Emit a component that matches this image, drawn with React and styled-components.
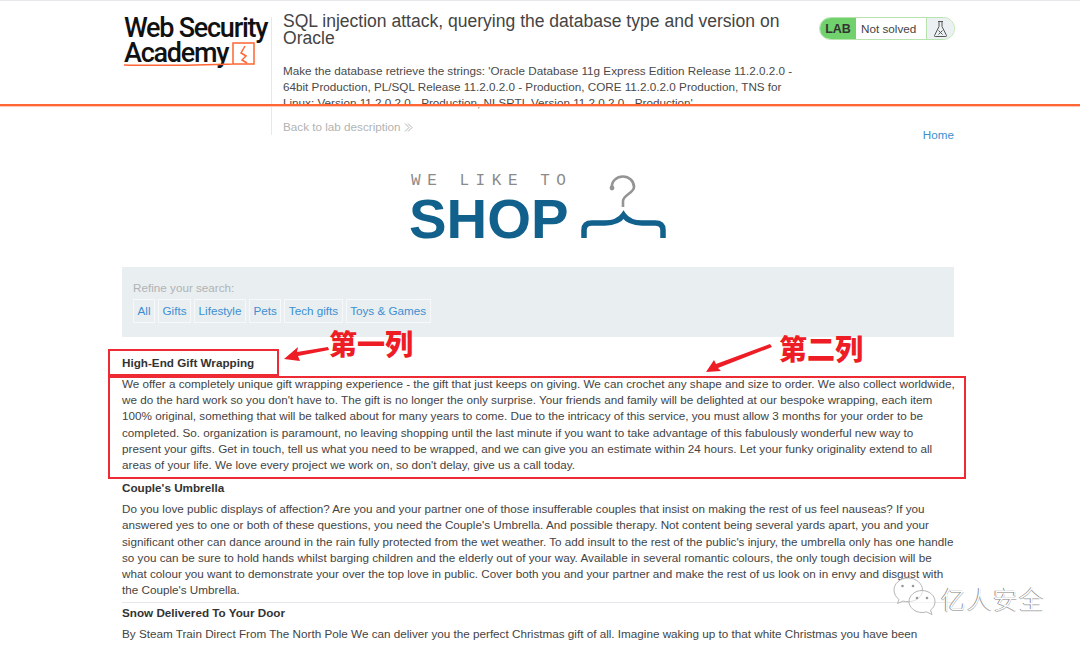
import React from "react";
import styled, { createGlobalStyle } from "styled-components";

const Global = createGlobalStyle`
  html, body {
    margin: 0;
    padding: 0;
    background: #fff;
    overflow: hidden;
  }
  body {
    font-family: "Liberation Sans", Arial, sans-serif;
    color: #333332;
  }
`;

const Page = styled.div`
  position: relative;
  width: 1080px;
  height: 645px;
  overflow: hidden;
  border-top: 1px solid #e6e8ec;
  box-sizing: border-box;
`;

const Header = styled.header`
  display: flex;
  align-items: flex-start;
  height: 127px;
  padding: 16px 125px 0 124px;
  box-sizing: border-box;
`;

const LogoBlock = styled.div`
  position: relative;
  width: 147px;
  height: 60px;
  margin-top: -1px;
  font-family: Roboto, "Liberation Sans", sans-serif;
  font-weight: 500;
  color: #111;
  font-size: 27px;
  line-height: 25px;
  letter-spacing: -1.25px;
  white-space: nowrap;
`;

const LogoLine = styled.div`
  display: block;
`;

const LogoMark = styled.svg`
  position: absolute;
  left: -1px;
  top: 25px;
`;

const Description = styled.div`
  width: 537px;
  height: 118px;
  box-sizing: border-box;
  padding: 0 0 0 11px;
  border-left: 1px solid #e6e8ec;
`;

const Title = styled.h2`
  margin: -4px 0 16px;
  font-size: 17.55px;
  font-weight: 400;
  line-height: 17px;
  color: #444;
`;

const Brief = styled.p`
  margin: 0 0 8px;
  font-size: 11.7px;
  line-height: 16px;
  color: #4a4a4a;
`;

const BackLink = styled.a`
  display: flex;
  align-items: center;
  gap: 3px;
  font-size: 11.7px;
  line-height: 16px;
  color: #b3b3b3;
`;

const Status = styled.div`
  display: flex;
  align-items: stretch;
  height: 23px;
  width: 136px;
  margin-left: 11px;
  box-sizing: border-box;
  border: 1px solid #b8e3ae;
  border-radius: 12px;
  overflow: hidden;
  font-size: 11.7px;
`;

const StatusTag = styled.span`
  display: flex;
  align-items: center;
  justify-content: center;
  width: 36px;
  background: #70d16d;
  font-size: 12.5px;
  font-weight: 700;
  color: #333;
`;

const StatusText = styled.span`
  flex: 1;
  display: flex;
  align-items: center;
  padding-left: 5px;
  color: #444;
`;

const StatusIcon = styled.span`
  display: flex;
  align-items: center;
  justify-content: center;
  width: 27px;
  background: #ebf0f2;
  border-left: 1px solid #b8e3ae;
`;

const OrangeRule = styled.div`
  position: absolute;
  left: 0;
  right: 0;
  top: 103px;
  height: 2px;
  background: #ff6633;
  box-shadow: 0 1px 0 #ffc9b5;
`;

const Main = styled.main`
  width: 832px;
  margin: 0 auto 0 122px;
`;

const HomeRow = styled.nav`
  display: flex;
  justify-content: flex-end;
  height: 21px;
  font-size: 11.7px;
  line-height: 14px;
`;

const LinkText = styled.a`
  color: #3d8fd1;
`;

const ShopLogo = styled.div`
  display: flex;
  align-items: flex-start;
  width: 256px;
  height: 66px;
  margin: 24px auto 0;
`;

const ShopWords = styled.div`
  display: flex;
  flex-direction: column;
  width: 171px;
`;

const ShopTag = styled.span`
  margin: 0 0 9px 1px;
  font-family: "Liberation Mono", monospace;
  font-size: 16px;
  line-height: 16px;
  letter-spacing: 6.55px;
  color: #8a8a8a;
  white-space: nowrap;
`;

const ShopName = styled.span`
  margin-left: -1px;
  font-size: 56.3px;
  font-weight: 700;
  line-height: 41px;
  color: #11618c;
`;

const Hanger = styled.svg`
  margin-top: 2px;
`;

const Filters = styled.section`
  height: 70px;
  margin-top: 28px;
  box-sizing: border-box;
  padding: 14px 11px 0;
  background: #e9eef1;
`;

const FilterLabel = styled.div`
  font-size: 11.7px;
  line-height: 14px;
  color: #b0b3b5;
`;

const FilterList = styled.div`
  display: flex;
  gap: 3px;
  margin-top: 4px;
`;

const FilterChip = styled.a`
  display: block;
  height: 24px;
  box-sizing: border-box;
  padding: 4px 3.5px;
  border: 1px solid #f6f8f9;
  font-size: 11.7px;
  line-height: 14px;
  color: #3d8fd1;
`;

const Table = styled.div`
  margin-top: 16px;
`;

const Row = styled.article`
  border-bottom: 1px solid #e6e8ec;
  padding-bottom: ${({ $pad }) => $pad}px;
`;

const RowTitle = styled.h4`
  margin: 0 0 5px;
  padding-top: 2px;
  font-size: 11.7px;
  font-weight: 700;
  line-height: 16px;
  color: #333;
`;

const RowBody = styled.p`
  margin: 0 -1px 0 0;
  font-size: 11.7px;
  line-height: 16.2px;
  color: #444;
`;

const RedBox = styled.div`
  position: absolute;
  left: ${({ $x }) => $x}px;
  top: ${({ $y }) => $y}px;
  width: ${({ $w }) => $w}px;
  height: ${({ $h }) => $h}px;
  box-sizing: border-box;
  border: 2px solid #ee2a35;
`;

const Note = styled.span`
  position: absolute;
  left: ${({ $x }) => $x}px;
  top: ${({ $y }) => $y}px;
  font-family: "Noto Sans CJK SC", sans-serif;
  font-size: 28px;
  font-weight: 900;
  line-height: 32px;
  color: #ee1c25;
  white-space: nowrap;
`;

const Arrow = styled.svg`
  position: absolute;
  left: ${({ $x }) => $x}px;
  top: ${({ $y }) => $y}px;
`;

const Watermark = styled.div`
  position: absolute;
  left: 893px;
  top: 576px;
  display: flex;
  align-items: center;
  gap: 5px;
`;

const WatermarkText = styled.span`
  font-family: "Noto Sans CJK SC", sans-serif;
  font-size: 25px;
  font-weight: 300;
  line-height: 30px;
  letter-spacing: 1px;
  margin-top: 3px;
  color: #fff;
  text-shadow: -1px 0 0 #8d8d8d, 0 1px 0 #b5b5b5;
`;

const categories = ["All", "Gifts", "Lifestyle", "Pets", "Tech gifts", "Toys & Games"];

const rows = [
  {
    title: "High-End Gift Wrapping",
    pad: 4,
    body: "We offer a completely unique gift wrapping experience - the gift that just keeps on giving. We can crochet any shape and size to order. We also collect worldwide, we do the hard work so you don't have to. The gift is no longer the only surprise. Your friends and family will be delighted at our bespoke wrapping, each item 100% original, something that will be talked about for many years to come. Due to the intricacy of this service, you must allow 3 months for your order to be completed. So. organization is paramount, no leaving shopping until the last minute if you want to take advantage of this fabulously wonderful new way to present your gifts. Get in touch, tell us what you need to be wrapped, and we can give you an estimate within 24 hours. Let your funky originality extend to all areas of your life. We love every project we work on, so don't delay, give us a call today.",
  },
  {
    title: "Couple's Umbrella",
    pad: 4,
    body: "Do you love public displays of affection? Are you and your partner one of those insufferable couples that insist on making the rest of us feel nauseas? If you answered yes to one or both of these questions, you need the Couple's Umbrella. And possible therapy. Not content being several yards apart, you and your significant other can dance around in the rain fully protected from the wet weather. To add insult to the rest of the public's injury, the umbrella only has one handle so you can be sure to hold hands whilst barging children and the elderly out of your way. Available in several romantic colours, the only tough decision will be what colour you want to demonstrate your over the top love in public. Cover both you and your partner and make the rest of us look on in envy and disgust with the Couple's Umbrella.",
  },
  {
    title: "Snow Delivered To Your Door",
    pad: 4,
    body: "By Steam Train Direct From The North Pole We can deliver you the perfect Christmas gift of all. Imagine waking up to that white Christmas you have been",
  },
];

function App() {
  return (
    <Page>
      <Global />
      <Header>
        <LogoBlock>
          <LogoLine>Web Security</LogoLine>
          <LogoLine>Academy</LogoLine>
          <LogoMark width="132" height="32" viewBox="0 0 132 32" fill="none" stroke="#ff6633">
            <path d="M1 24c35 1 70 0 109-1V2h21v21h-21" strokeWidth="1.5" />
            <path d="M122 5l-4 7 5 3-4 4 5 3" strokeWidth="1.5" />
          </LogoMark>
        </LogoBlock>
        <Description>
          <Title>SQL injection attack, querying the database type and version on Oracle</Title>
          <Brief>
            Make the database retrieve the strings: 'Oracle Database 11g Express Edition Release 11.2.0.2.0 - 64bit Production, PL/SQL Release 11.2.0.2.0 - Production, CORE 11.2.0.2.0 Production, TNS for Linux: Version 11.2.0.2.0 - Production, NLSRTL Version 11.2.0.2.0 - Production'
          </Brief>
          <BackLink>
            Back to lab description
            <svg width="9" height="9" viewBox="0 0 9 9" fill="none" stroke="#b3b3b3" strokeWidth="1">
              <path d="M1 .5l4 4-4 4M4 .5l4 4-4 4" />
            </svg>
          </BackLink>
        </Description>
        <Status>
          <StatusTag>LAB</StatusTag>
          <StatusText>Not solved</StatusText>
          <StatusIcon>
            <svg width="15" height="18" viewBox="0 0 15 18" fill="none" stroke="#555" strokeWidth="1">
              <path d="M5 1.500h5M6 1.500v5L1.500 15.500c-.3.700 0 1 .7 1h10.600c.7 0 1-.3.7-1L9 6.500v-5" />
              <path d="M5.500 10.500l4 4M9.500 10.500l-4 4" />
            </svg>
          </StatusIcon>
        </Status>
      </Header>
      <Main>
        <HomeRow>
          <LinkText>Home</LinkText>
        </HomeRow>
        <ShopLogo>
          <ShopWords>
            <ShopTag>WE LIKE TO</ShopTag>
            <ShopName>SHOP</ShopName>
          </ShopWords>
          <Hanger width="85" height="63" viewBox="0 0 85 63" fill="none">
            <path d="M31 13C30 6 36 1.500 42 1.500C48 1.500 53 6 53 12C53 18 42 20 42 26V32" stroke="#949494" strokeWidth="2.600" />
            <circle cx="31" cy="13" r="2.400" fill="#949494" />
            <path d="M3 63V55C3 50 6 48 11 48H24C32 48 39 45 42.500 40C46 45 53 48 61 48H74C79 48 82 50 82 55V63" stroke="#11618c" strokeWidth="5.500" />
          </Hanger>
        </ShopLogo>
        <Filters>
          <FilterLabel>Refine your search:</FilterLabel>
          <FilterList>
            {categories.map((name) => (
              <FilterChip key={name}>{name}</FilterChip>
            ))}
          </FilterList>
        </Filters>
        <Table>
          {rows.map((row) => (
            <Row key={row.title} $pad={row.pad}>
              <RowTitle>{row.title}</RowTitle>
              <RowBody>{row.body}</RowBody>
            </Row>
          ))}
        </Table>
      </Main>

      <OrangeRule />
      <RedBox $x={108} $y={348} $w={171} $h={27} />
      <RedBox $x={108} $y={375} $w={858} $h={103} />
      <Note $x={329} $y={326}>第一列</Note>
      <Note $x={779} $y={331}>第二列</Note>
      <Arrow $x={284} $y={344} width="46" height="16" viewBox="0 0 46 16" fill="#ee1c25">
        <path d="M0 14L14 2l-1 5 31-5 1 3-31 6 2 5Z" />
      </Arrow>
      <Arrow $x={706} $y={343} width="66" height="30" viewBox="0 0 66 30" fill="#ee1c25">
        <path d="M0 28l8-12 2 4L64 0l2 3-54 21 3 3Z" />
      </Arrow>
      <Watermark>
        <svg width="43" height="38" viewBox="0 0 43 38" fill="rgba(255,255,255,.55)" stroke="#b5b5b5" strokeWidth="1">
          <path d="M15 1C7 1 1 6.500 1 13c0 4 2 7 5 9.500l-1.500 4L10 24c1.500.5 3 .7 5 .7 8 0 14.500-5.200 14.500-11.700S23 1 15 1Z" />
          <path d="M29 13.500c-7 0-13 5-13 11s6 11 13 11c1.500 0 3-.2 4.500-.6l5.500 2.600-1.500-4.500c3-2 4.500-5 4.500-8.500 0-6-6-11-13-11Z" />
          <g fill="#999" stroke="none">
            <circle cx="9.500" cy="9" r="1.300" />
            <circle cx="20" cy="9" r="1.300" />
            <circle cx="24" cy="21" r="1.300" />
            <circle cx="34" cy="21" r="1.300" />
          </g>
        </svg>
        <WatermarkText>亿人安全</WatermarkText>
      </Watermark>
    </Page>
  );
}

export default App;
